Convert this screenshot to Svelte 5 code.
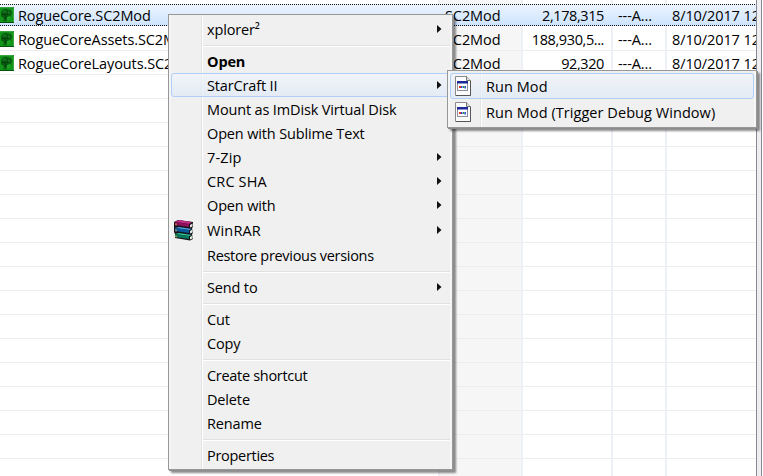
<script>
  const files = [
    { name: 'RogueCore.SC2Mod', type: 'SC2Mod', size: '2,178,315', attr: '---A...', date: '8/10/2017 12', selected: true },
    { name: 'RogueCoreAssets.SC2Mod', type: 'SC2Mod', size: '188,930,5...', attr: '---A...', date: '8/10/2017 12' },
    { name: 'RogueCoreLayouts.SC2Mod', type: 'SC2Mod', size: '92,320', attr: '---A...', date: '8/10/2017 12' },
    ...Array.from({ length: 17 }, () => ({})),
  ];
  const menu = [
    { label: 'xplorer²', sub: true },
    { sep: true },
    { label: 'Open', bold: true },
    { label: 'StarCraft II', sub: true, hot: true },
    { label: 'Mount as ImDisk Virtual Disk' },
    { label: 'Open with Sublime Text' },
    { label: '7-Zip', sub: true, wide: true },
    { label: 'CRC SHA', sub: true, wide: true },
    { label: 'Open with', sub: true },
    { label: 'WinRAR', sub: true, rar: true, wide: true },
    { label: 'Restore previous versions', tight: true },
    { sep: true },
    { label: 'Send to', sub: true },
    { sep: true },
    { label: 'Cut' },
    { label: 'Copy' },
    { sep: true },
    { label: 'Create shortcut', tight: true },
    { label: 'Delete' },
    { label: 'Rename' },
    { sep: true },
    { label: 'Properties', tight: true },
  ];
  const submenu = [{ label: 'Run Mod', hot: true }, { label: 'Run Mod (Trigger Debug Window)' }];
</script>

<div class="window">
  <div class="list">
    {#each files as f}
      <div class="row" class:selected={f.selected}>
        <div class="cell name">
          {#if f.name}
            <svg class="modicon" width="16" height="16" viewBox="0 0 16 16">
              <rect width="16" height="16" fill="#07500e" />
              <rect x="1" y="1" width="14" height="14" fill="#129619" />
              <path d="M0 .5h15.500V15" fill="none" stroke="#3aa540" />
              <path d="M3 5l2-2.500 3-1 2 1 3 .5 1 3-1 3-2 1-1 3-3 1.500-2-1 .5-3L3 9.500z" fill="#075d10" />
              <path d="M9 10l3-1v3l-3 2z" fill="#1fa326" />
              <path d="M5 5l3-1M10 5l2 1M5 11l1 2" stroke="#1d8a24" />
              <path d="M4 7l3 1 3-1M8 9l-1 3" stroke="#033808" fill="none" />
            </svg>
            <span>{f.name}</span>
          {/if}
        </div>
        <div class="cell type">{f.type ?? ''}</div>
        <div class="cell size">{f.size ?? ''}</div>
        <div class="cell attr">{f.attr ?? ''}</div>
        <div class="cell date">{f.date ?? ''}</div>
      </div>
    {/each}
  </div>
  <div class="edge"></div>

  <div class="menu main">
    {#each menu as m}
      {#if m.sep}
        <div class="sep"></div>
      {:else}
        <div class="item" class:hot={m.hot} class:tall={m.rar}>
          <span class="icon">
            {#if m.rar}
              <svg width="22" height="22" viewBox="0 0 22 22">
                <path d="M1 3L5 1 20 3v5l-1 1 1 5-1 1 1 5-3 1.500L2 19v-4l-1-2V9L1 7z" fill="#17121a" />
                <path d="M2 3l4-2 13 2-3 2z" fill="#c02a86" />
                <path d="M2 3l14 2v3L2 6z" fill="#8c0f57" />
                <path d="M17 6l2.500-1.500v3L17 8.500z" fill="#e8dfe4" />
                <path d="M2 9l4-1 13 2-3 1z" fill="#4aa2e2" />
                <path d="M2 9l14 2v3L2 12z" fill="#08589b" />
                <path d="M17 12l2.500-1.500v3L17 14.500z" fill="#d7e8f2" />
                <path d="M2 15l4-1 13 2-3 1z" fill="#2bc39a" />
                <path d="M2 15l14 2v3L2 18z" fill="#08775a" />
                <path d="M17 18l2.500-1.500v3L17 20.500z" fill="#d9efd9" />
                <path d="M3 4.500v2M3 10.500v2M3 16.500v2" stroke="#d9b34c" />
              </svg>
            {/if}
          </span>
          <span class="label" class:bold={m.bold} class:tight={m.tight} class:wide={m.wide}>{m.label}</span>
          {#if m.sub}
            <svg class="arrow" width="5" height="8" viewBox="0 0 5 8"><path d="M0 0l4.500 4L0 8z" fill="#111" /></svg>
          {/if}
        </div>
      {/if}
    {/each}
  </div>

  <div class="menu side">
    {#each submenu as m}
      <div class="item tall" class:hot={m.hot}>
        <span class="icon">
          <svg width="16" height="20" viewBox="0 0 16 20">
            <path d="M.5.5h11l4 4v15H.5z" fill="#fcfcfc" stroke="#8b8b8b" />
            <path d="M11.500.5v4h4" fill="#ddd" stroke="#777" />
            <path d="M15.500 5v14.500H1" fill="none" stroke="#555" />
            <rect x="2.500" y="5.500" width="10" height="9" fill="#fff" stroke="#8a8d9c" />
            <rect x="2" y="5" width="11" height="2.500" fill="#1c2799" />
            <path d="M4 10h2v2H4z" fill="#e2322f" />
            <path d="M6 10h1.500v2H6z" fill="#2b42d2" />
            <path d="M8 10h1.500v2H8z" fill="#27983b" />
            <path d="M9.500 10H11v2.500H9.500z" fill="#3452d6" />
          </svg>
        </span>
        <span class="label">{m.label}</span>
      </div>
    {/each}
  </div>
</div>

<style>
  :global(body) { margin: 0; overflow: hidden; }
  .window {
    position: relative; display: flex; width: 763px; height: 476px; overflow: hidden;
    background: #fff; color: #000;
    font: 14.5px/20px "Open Sans", "Noto Sans", sans-serif; letter-spacing: -0.1px;
  }
  .list { width: 756px; flex: none; padding-top: 3px; background: linear-gradient(90deg, #fff 438px, #eef0f4 438px 440px, #f6f6f6 440px 521px, #edf0f5 521px 523px, #fff 523px 611px, #edf0f5 611px 613px, #fff 613px 665px, #edf0f5 665px 667px, #fff 667px); }
  .row { display: grid; grid-template-columns: 440px 83px 90px 54px 89px; height: 24px; box-sizing: border-box; border-bottom: 1px solid #ededee; }
  .row.selected {
    border: 0;
    background:
      repeating-linear-gradient(90deg, #111 0 1px, transparent 1px 2px) 0 1px / 100% 1px no-repeat,
      repeating-linear-gradient(90deg, #111 0 1px, transparent 1px 2px) 0 22px / 100% 1px no-repeat,
      linear-gradient(#edf5ff, #cce3fd) 0 1px / 100% 22px no-repeat;
  }
  .cell { overflow: hidden; white-space: nowrap; padding-top: 3px; }
  .name { display: flex; gap: 4px; }
  .modicon { flex: none; margin: 1px 0 0 -2px; }
  .type { padding-left: 5px; }
  .size { text-align: right; padding-right: 9px; letter-spacing: -0.4px; }
  .attr { padding-left: 5px; }
  .date { padding-left: 5px; }
  .edge { box-sizing: border-box; width: 6px; border: 1px solid #858995; border-width: 0 1px; background: #efeff2; }
  .menu {
    position: absolute; box-sizing: border-box; padding: 2px; border: 1px solid #979797;
    box-shadow: 1px 1px 0 #8d8d8d, 3px 3px 2px rgba(0, 0, 0, 0.45);
  }
  .main { left: 168px; top: 14px; width: 285px; height: 456px; background: linear-gradient(90deg, #f5f5f5 2px, #f0f0f0 2px 32px, #e2e3e3 32px 33px, #fff 33px 34px, #f0f0f0 34px 281px, #f5f5f5 281px); }
  .side { left: 447px; top: 70px; width: 310px; height: 58px; background: linear-gradient(90deg, #f5f5f5 2px, #f0f0f0 2px 32px, #e2e3e3 32px 33px, #fff 33px 34px, #f0f0f0 34px 306px, #f5f5f5 306px); }
  .item { display: flex; align-items: center; box-sizing: border-box; height: 24px; border: 1px solid transparent; border-radius: 3px; }
  .item.tall { height: 26px; }
  .item.hot { border-color: #aecff7; background: linear-gradient(rgba(241, 245, 251, 0.7), rgba(222, 233, 247, 0.7)); }
  .icon { display: flex; width: 35px; flex: none; }
  .icon svg { margin-left: 1px; }
  .side .icon svg { margin-left: 4px; }
  .label { flex: 1; white-space: nowrap; padding-top: 2px; letter-spacing: -0.15px; }
  .side .label { letter-spacing: 0.06px; }
  .label.tight { letter-spacing: -0.3px; }
  .label.wide { letter-spacing: 0.15px; }
  .bold { font-weight: 700; }
  .arrow { margin-right: 7px; }
  .sep { height: 1px; margin: 4px 0 2px 32px; background: #e0e0e0; border-bottom: 1px solid #fff; }
</style>
